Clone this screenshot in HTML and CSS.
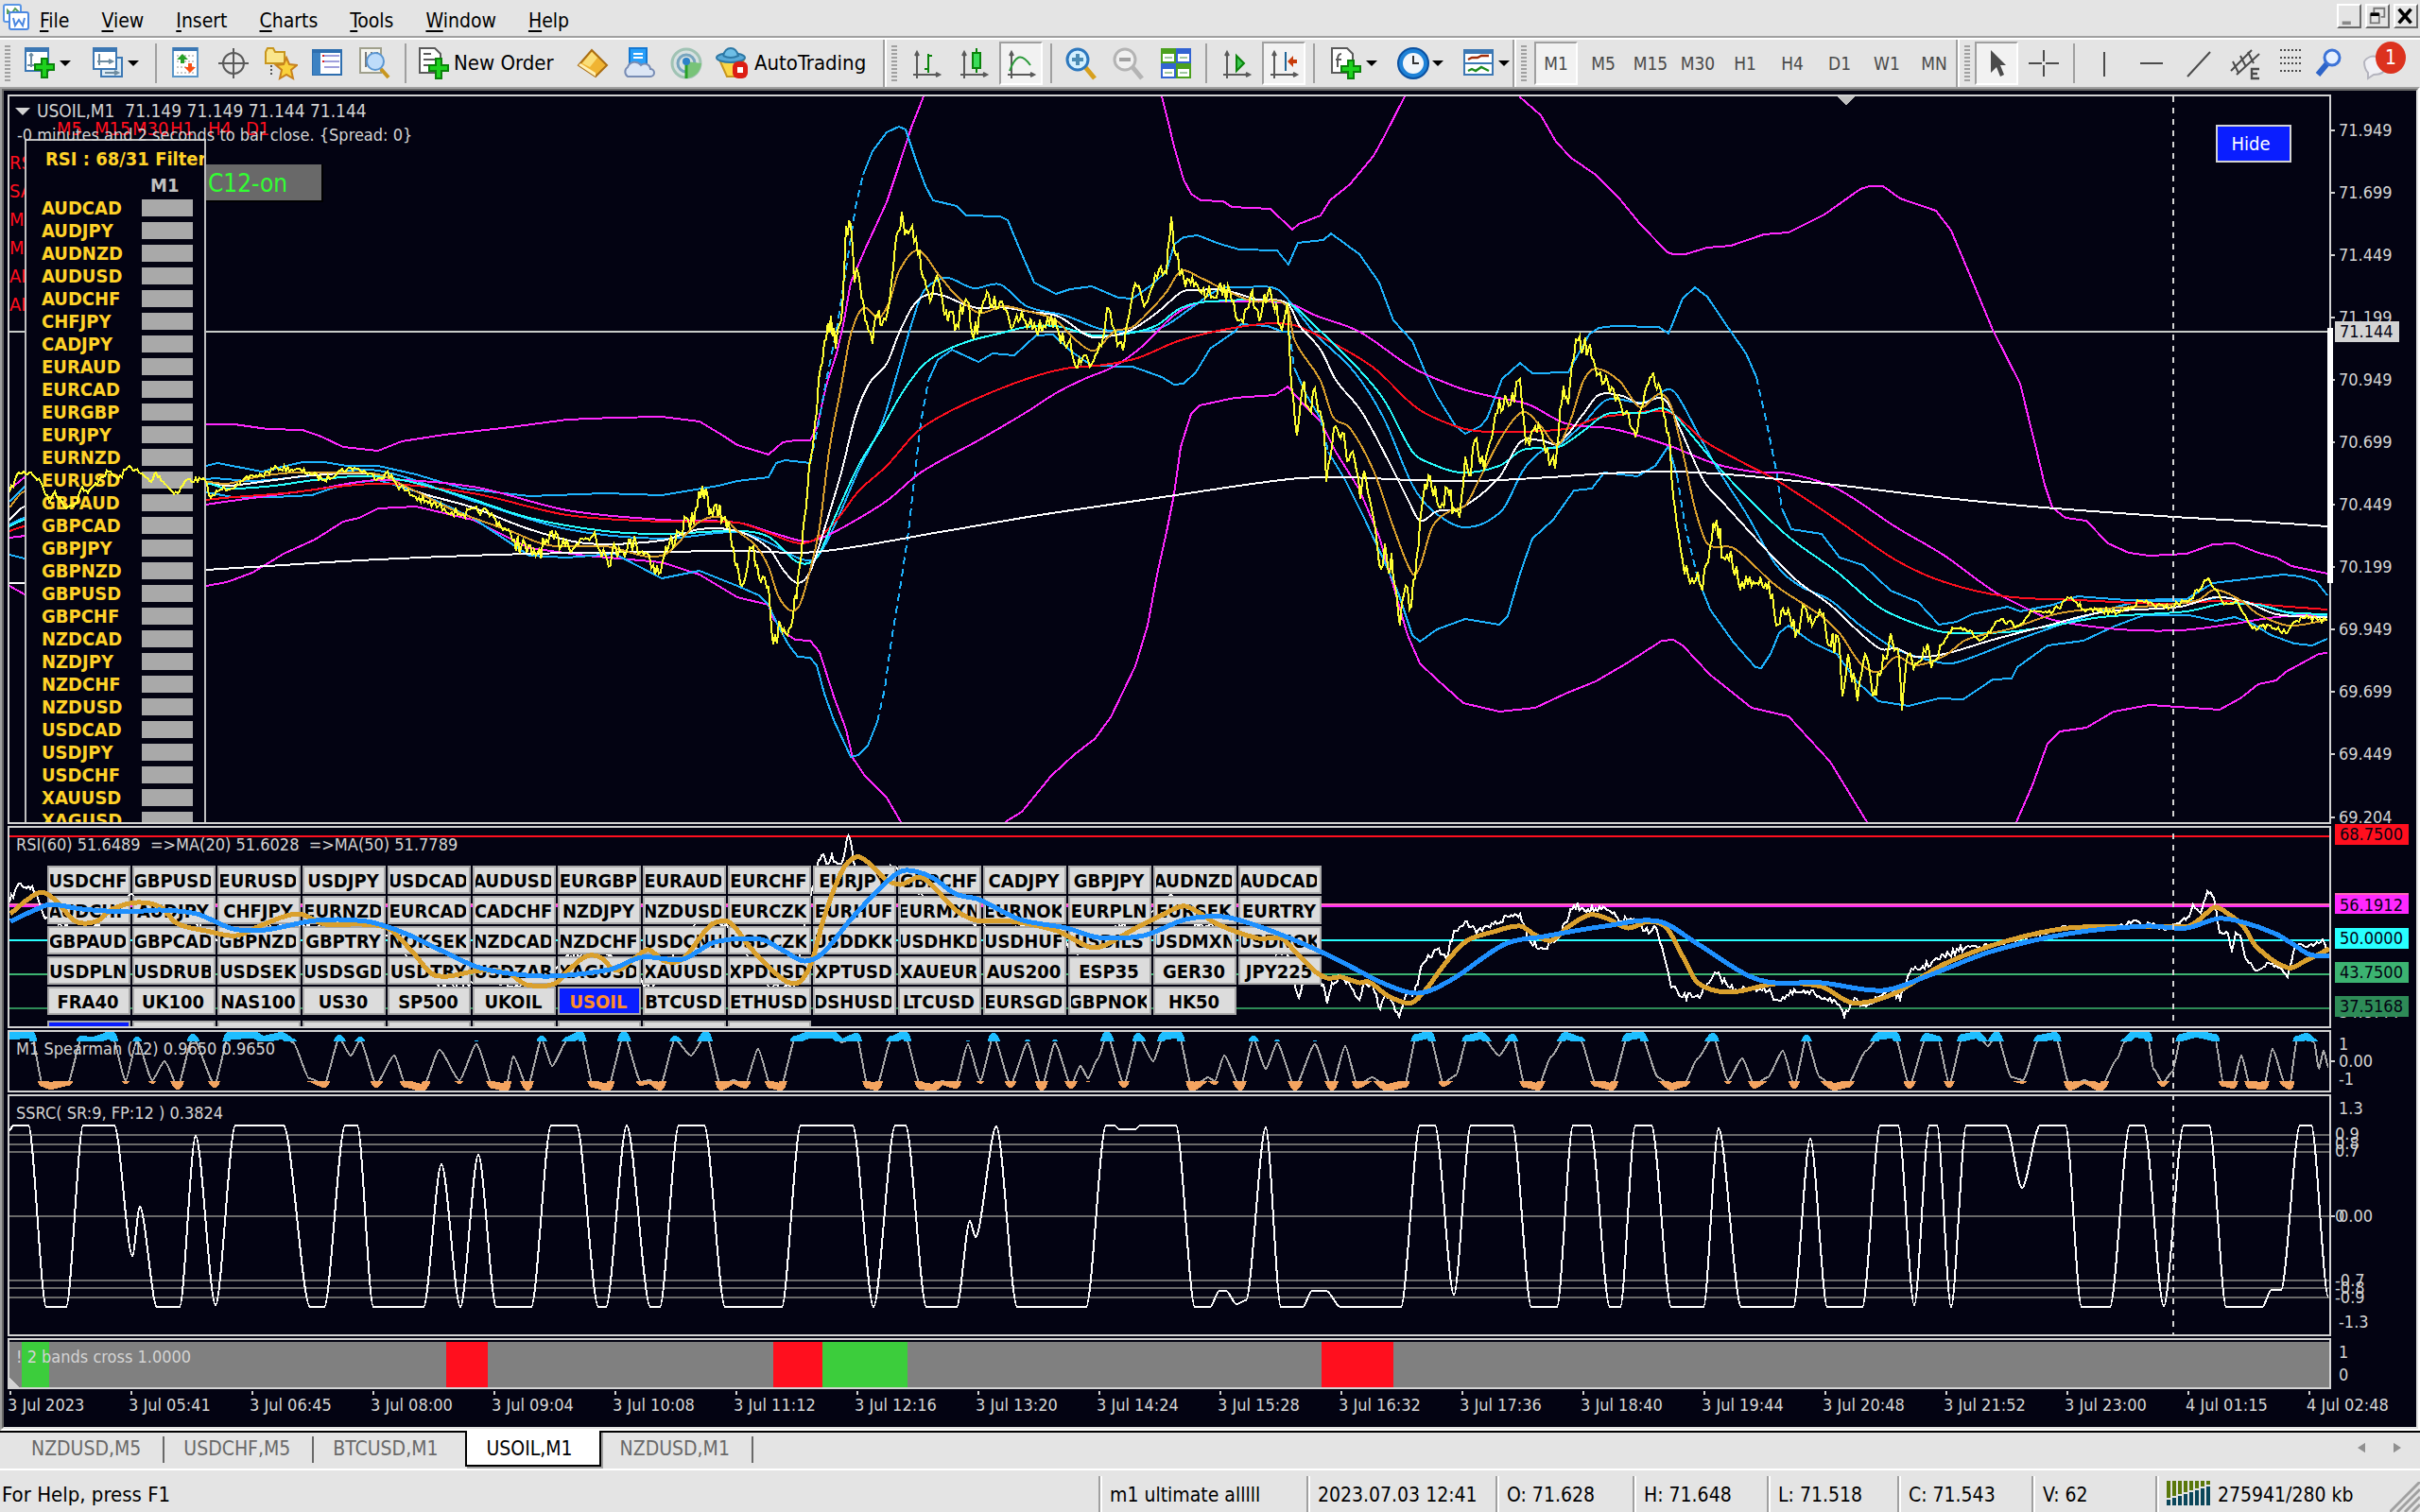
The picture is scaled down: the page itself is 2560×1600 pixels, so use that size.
FILE: index.html
```html
<!DOCTYPE html>
<html lang="en">

<head>
    <meta charset="utf-8" />
    <title>USOIL,M1</title>
    <meta name="viewport" content="width=device-width, initial-scale=1">
    <link rel="stylesheet" href="styles.css">
</head>

<body>
    <header class="menubar">
        <svg class="app-icon" viewBox="0 0 15 15">
            <rect x="1" y="1" width="9" height="9" rx="1" fill="#fff" stroke="#5a96e6" />
            <path d="M3 6V4l2 2 2-3 2 2" fill="none" stroke="#5aa05a" />
            <rect x="4" y="5" width="10" height="9" rx="1" fill="#fff" stroke="#4b87e1" />
            <path d="M6 8l1 4 2-3 2 3 1-4" fill="none" stroke="#4b87e1" />
        </svg>
        <nav class="menu">
            <a href="#"><u>F</u>ile</a>
            <a href="#"><u>V</u>iew</a>
            <a href="#"><u>I</u>nsert</a>
            <a href="#"><u>C</u>harts</a>
            <a href="#"><u>T</u>ools</a>
            <a href="#"><u>W</u>indow</a>
            <a href="#"><u>H</u>elp</a>
        </nav>
        <div class="window-buttons">
            <button aria-label="Minimize"><svg viewBox="0 0 12 12"><path d="M2 10h5" stroke="#888" stroke-width="2" /></svg></button>
            <button aria-label="Restore"><svg viewBox="0 0 12 12" fill="none" stroke="#777"><path d="M4 4V1.500h6v5H8" /><path d="M2 5h5v5H2z" /><path d="M2 5h5" stroke="#000" stroke-width="2" /></svg></button>
            <button aria-label="Close"><svg viewBox="0 0 12 12"><path d="M2 2l7 8M9 2l-7 8" stroke="#000" stroke-width="2" /></svg></button>
        </div>
    </header>

    <div class="toolbar">
        <div class="tools tools-main">
            <span class="grip"></span>
            <button class="tool drop" aria-label="New chart">
                <svg viewBox="0 0 18 18"><rect x="1" y="1" width="12" height="12" fill="#fff" stroke="#3c78b4" /><path d="M1 2h12" stroke="#3c78b4" stroke-width="2" /><path d="M4 4v7M2 10h8M3 5l1-1 1 1" stroke="#6e8ca0" fill="none" /><path d="M9.500 6.500h3v3h3.500v3h-3.500v4h-3v-4H6v-3h3.500z" fill="#1ed21e" stroke="#0a820a" /></svg>
            </button>
            <button class="tool drop" aria-label="Profiles">
                <svg viewBox="0 0 18 18"><rect x="5" y="6" width="11" height="10" fill="#dcebf5" stroke="#3c78b4" /><rect x="1" y="1" width="12" height="11" fill="#fff" stroke="#3c78b4" /><path d="M1 2h12" stroke="#3c78b4" stroke-width="2" /><path d="M4 4v6M3 8h8M9 7l2 1-2 1M7 14h7M12 13l2 1-2 1" stroke="#6e8ca0" fill="none" /></svg>
            </button>
            <span class="sep"></span>
            <button class="tool" aria-label="Market Watch">
                <svg viewBox="0 0 18 18"><rect x="2" y="1" width="13" height="15" fill="#fff" stroke="#5a96c8" /><path d="M2 1.500h13" stroke="#3c78b4" stroke-width="2" /><path d="M4 5h9M4 8h9M4 11h9M4 14h9" stroke="#c8c8c8" stroke-dasharray="1 1" /><path d="M7 4l3 3H8v2H6V7H4z" fill="#28a028" /><path d="M11 14l3-3h-2V9h-2v2H8z" fill="#fa5014" /></svg>
            </button>
            <button class="tool" aria-label="Data Window">
                <svg viewBox="0 0 18 18" fill="none" stroke="#5a5a5a"><circle cx="9" cy="9" r="5.500" /><path d="M9 1v16M1 9h16" /></svg>
            </button>
            <button class="tool" aria-label="Navigator">
                <svg viewBox="0 0 18 18"><path d="M1 3l1-2h3l1 2h5v6H1z" fill="#fae68c" stroke="#c8961e" /><path d="M4 10v6" stroke="#555" stroke-dasharray="1 1" /><path d="M12 6l1.500 3.500 4 .5-3 2.500 1 4.500-3.500-2-3.500 2 1-4.500-3-2.500 4-.5z" fill="#fad23c" stroke="#c8821e" /></svg>
            </button>
            <button class="tool" aria-label="Terminal">
                <svg viewBox="0 0 18 18"><rect x="1" y="2" width="15" height="13" fill="#fff" stroke="#2d6eaf" /><rect x="1" y="2" width="4" height="13" fill="#3c82c3" /><path d="M1 2.500h15" stroke="#2d6eaf" stroke-width="2" /><path d="M7 5h8M7 8h8M7 11h8" stroke="#a0a0dc" /><path d="M6 5h1M6 8h1" stroke="#dc1e1e" /></svg>
            </button>
            <button class="tool" aria-label="Strategy Tester">
                <svg viewBox="0 0 18 18"><rect x="1" y="1" width="11" height="13" fill="#f5f5f0" stroke="#a0a08c" /><path d="M4 3v8M7 3v8M10 3v4" stroke="#787878" /><circle cx="9" cy="8" r="4.500" fill="#bedcfa" stroke="#5a96d2" /><path d="M12 12l4 4.500" stroke="#c8961e" stroke-width="2" /></svg>
            </button>
            <span class="sep"></span>
            <button class="tool text-tool order">
                <svg viewBox="0 0 18 18"><path d="M1 1h8l3 3v10H1z" fill="#fff" stroke="#5a5a5a" /><path d="M3 4h4M3 7h7M3 10h5" stroke="#5a5a5a" /><path d="M9.500 6.500h3v3.500h3.500v3h-3.500v4h-3v-4H6v-3h3.500z" fill="#1ed21e" stroke="#0a820a" /></svg>
                New Order
            </button>
            <button class="tool" aria-label="MetaEditor">
                <svg viewBox="0 0 18 18"><path d="M9 2l8 8-6 6-9-6z" fill="#f0b432" stroke="#aa6e14" /><path d="M2 10l9 6v-2L3 9z" fill="#fff0b4" /><path d="M9 3l3 3-4 5-4-2z" fill="#fade78" /></svg>
            </button>
            <button class="tool" aria-label="Virtual Hosting">
                <svg viewBox="0 0 18 18"><path d="M4 1h9v11H4z" fill="#28a0fa" stroke="#1478d2" /><path d="M6 4h5M6 6h5" stroke="#fff" /><path d="M3 16a3 3 0 0 1 0-5 4 4 0 0 1 7-1 3 3 0 0 1 5 2 2 2 0 0 1 0 4z" fill="#dce6f5" stroke="#788cb4" /></svg>
            </button>
            <button class="tool" aria-label="Signals">
                <svg viewBox="0 0 18 18" fill="none"><circle cx="9" cy="9" r="7.500" fill="#d7e1e1" stroke="#a0c3b4" stroke-width="1.500" /><circle cx="9" cy="9" r="4.500" stroke="#78a5be" stroke-width="1.500" /><path d="M9 8v9q7-1 8-8z" fill="#78c378" /><path d="M9 8v9" stroke="#28a028" stroke-width="1.500" /><circle cx="9" cy="8" r="2" fill="#2d82c8" /></svg>
            </button>
            <button class="tool text-tool auto">
                <svg viewBox="0 0 18 18"><path d="M2 7h13l-4 9H6z" fill="#fad746" stroke="#c8961e" /><ellipse cx="8" cy="6" rx="7.500" ry="2.500" fill="#5aaad7" stroke="#2d78a5" /><path d="M4 5q1-4 4-4t4 4q-4 2-8 0" fill="#6ebee6" stroke="#2d78a5" /><rect x="9" y="8" width="8" height="9" rx="3" fill="#dc1e14" /><path d="M11.500 11h3v3h-3z" fill="#fff" /></svg>
                AutoTrading
            </button>
        </div>
        <div class="tools tools-chart">
            <span class="grip"></span>
            <button class="tool" aria-label="Bar chart"><svg viewBox="0 0 18 18" fill="none" stroke="#5a5a5a"><path d="M4 3v14M2 15h14M3 5l1-2 1 2M14 14l2 1-2 1" /><path d="M10 4v10M10 5h2M8 12h2" stroke="#0a820a" /></svg></button>
            <button class="tool" aria-label="Candlesticks"><svg viewBox="0 0 18 18" fill="none" stroke="#5a5a5a"><path d="M4 3v14M2 15h14M3 5l1-2 1 2M14 14l2 1-2 1" /><path d="M10.500 1v13" stroke="#0a820a" /><rect x="8.500" y="3.500" width="4" height="8" fill="#3cdc5a" stroke="#0a820a" /></svg></button>
            <button class="tool pressed" aria-label="Line chart"><svg viewBox="0 0 18 18" fill="none" stroke="#5a5a5a"><path d="M4 3v14M2 15h14M3 5l1-2 1 2M14 14l2 1-2 1" /><path d="M3 13c3-8 6-10 11-3" stroke="#2d9b3c" /></svg></button>
            <span class="sep"></span>
            <button class="tool" aria-label="Zoom in"><svg viewBox="0 0 18 18"><path d="M11 11l5 6" stroke="#d7a01e" stroke-width="2.500" /><circle cx="7" cy="7" r="5.500" fill="#d2f0ff" stroke="#2d78be" stroke-width="1.500" /><path d="M4 7h6M7 4v6" stroke="#4b8cb4" stroke-width="2" /></svg></button>
            <button class="tool" aria-label="Zoom out"><svg viewBox="0 0 18 18"><path d="M11 11l5 6" stroke="#b4b4b4" stroke-width="2.500" /><circle cx="7" cy="7" r="5.500" fill="#f0f0f0" stroke="#b4b4b4" stroke-width="1.500" /><path d="M4 7h6" stroke="#a0a0a0" stroke-width="2" /></svg></button>
            <button class="tool" aria-label="Tile windows"><svg viewBox="0 0 18 18"><path d="M1 1h8v8H1z" fill="#4ba01e" /><path d="M9 1h8v8H9z" fill="#3264d2" /><path d="M1 9h8v8H1z" fill="#3264d2" /><path d="M9 9h8v8H9z" fill="#4ba01e" /><path d="M2 4h6v4H2zM10 4h6v4h-6zM2 12h6v4H2zM10 12h6v4h-6z" fill="#fff" /><path d="M3 6h4M11 6h4M3 14h4M11 14h4" stroke="#a0c8a0" /></svg></button>
            <span class="sep"></span>
            <button class="tool" aria-label="Auto scroll"><svg viewBox="0 0 18 18" fill="none" stroke="#5a5a5a"><path d="M4 3v14M2 15h14M3 5l1-2 1 2M14 14l2 1-2 1" /><path d="M9 5l4 4-4 4z" fill="#3cc850" stroke="#0a820a" /></svg></button>
            <button class="tool pressed" aria-label="Chart shift"><svg viewBox="0 0 18 18" fill="none" stroke="#5a5a5a"><path d="M4 3v14M2 15h14M3 5l1-2 1 2M14 14l2 1-2 1" /><path d="M10 3v10" stroke="#1e6496" /><path d="M11 8l3-3v2h2v2h-2v2z" fill="#c83c0a" stroke="none" /></svg></button>
            <span class="sep"></span>
            <button class="tool drop" aria-label="Indicators"><svg viewBox="0 0 18 18"><path d="M1 1h8l3 3v10H1z" fill="#fff" stroke="#5a5a5a" /><path d="M6 4q-2 0-2 3v4M3 7h3" stroke="#5a5a5a" fill="none" /><path d="M9.500 7.500h3v3h3.500v3h-3.500v3.500h-3v-3.500H6v-3h3.500z" fill="#1ed21e" stroke="#0a820a" /></svg></button>
            <button class="tool drop" aria-label="Periods"><svg viewBox="0 0 18 18"><circle cx="9" cy="9" r="8" fill="#1e82d7" stroke="#0a50a0" /><circle cx="9" cy="9" r="5.500" fill="#f0f5fa" /><path d="M9 5v4h3" stroke="#333" fill="none" /></svg></button>
            <button class="tool drop" aria-label="Templates"><svg viewBox="0 0 18 18"><rect x="1" y="2" width="15" height="13" fill="#fff" stroke="#3c78b4" /><path d="M1 3h15" stroke="#3c78b4" stroke-width="2" /><path d="M1 9h15" stroke="#3c78b4" /><path d="M3 7l2-1h3l2-1h4" stroke="#a02d0a" fill="none" stroke-width="1.200" /><path d="M3 13l2-1 2 1 3-2 2 1 2 1" stroke="#1e8c1e" fill="none" stroke-width="1.200" /></svg></button>
        </div>
        <div class="tools tools-period">
            <span class="grip"></span>
            <button class="tool period pressed">M1</button>
            <button class="tool period">M5</button>
            <button class="tool period">M15</button>
            <button class="tool period">M30</button>
            <button class="tool period">H1</button>
            <button class="tool period">H4</button>
            <button class="tool period">D1</button>
            <button class="tool period">W1</button>
            <button class="tool period">MN</button>
        </div>
        <div class="tools tools-draw">
            <span class="grip"></span>
            <button class="tool pressed" aria-label="Cursor"><svg viewBox="0 0 18 18"><path d="M6 2v12l3-3 2 5 2-1-2-5h3z" fill="#4b4b4b" /></svg></button>
            <button class="tool" aria-label="Crosshair"><svg viewBox="0 0 18 18" stroke="#4b4b4b"><path d="M9 2v6M9 10v6M1 9h7M10 9h7" /></svg></button>
            <span class="sep"></span>
            <button class="tool" aria-label="Vertical line"><svg viewBox="0 0 18 18" stroke="#4b4b4b"><path d="M9 3v13" /></svg></button>
            <button class="tool" aria-label="Horizontal line"><svg viewBox="0 0 18 18" stroke="#4b4b4b"><path d="M3 9h12" /></svg></button>
            <button class="tool" aria-label="Trendline"><svg viewBox="0 0 18 18" stroke="#4b4b4b"><path d="M3 16L15 3" /></svg></button>
            <button class="tool" aria-label="Equidistant channel"><svg viewBox="0 0 18 18" stroke="#4b4b4b" fill="none"><path d="M1 13L12 2M4 15L16 4M2 8l3 6M6 5l3 6M10 3l3 6" /><path d="M16 12h-4v5h4M12 14.500h3" stroke-width="1.200" /></svg></button>
            <button class="tool narrow" aria-label="Fibonacci"><svg viewBox="0 0 18 18" stroke="#4b4b4b"><path d="M4 2h11M4 6h11M4 9h11M4 13h11" stroke-dasharray="1 1" /></svg></button>
            <button class="tool narrow" aria-label="Search"><svg viewBox="0 0 18 18"><path d="M8 9l-5 6" stroke="#2d64c8" stroke-width="3" /><circle cx="10.500" cy="6" r="4" fill="#e6f0ff" stroke="#3c73d7" stroke-width="1.500" /></svg></button>
            <button class="tool chat" aria-label="Messages">
                <svg viewBox="0 0 18 18"><path d="M2 8a6 6 0 0 1 11 3q0 4-6 4l-3 2v-3q-2-2-2-6" fill="#f0f0f5" stroke="#b4b4be" /></svg>
                <span class="badge">1</span>
            </button>
        </div>
    </div>

    <main class="chart-window">
        <div class="chart-inner">
            <section class="panel" data-panel="price">
                <div class="plot">
                    <svg class="layer back" preserveAspectRatio="none"></svg>
                    <div class="side-labels">
                        <span>RSI</span><span>SAR</span><span>MA</span><span>MA</span><span>ALL</span><span>ALL</span>
                    </div>
                    <div class="signal">
                        <div class="signal-title" id="signal-title">RSI : 68/31 Filter</div>
                        <table aria-labelledby="signal-title">
                            <thead><tr><th></th><th>M1</th></tr></thead>
                            <tbody id="pairs"></tbody>
                        </table>
                    </div>
                    <div class="status-box">C12-on</div>
                    <div class="tf-labels">
                        <span>M5</span><span>M15</span><span>M30</span><span>H1</span><span>H4</span><span>D1</span>
                    </div>
                    <svg class="layer front" preserveAspectRatio="none"></svg>
                    <div class="chart-title">
                        <div class="quote"><i class="caret"></i>USOIL,M1&nbsp; 71.149 71.149 71.144 71.144</div>
                        <div>-0 minutes and 2 seconds to bar close. {Spread: 0}</div>
                    </div>
                    <button class="hide-button">Hide</button>
                </div>
                <div class="axis-wrap">
                    <div class="axis clipped"></div>
                    <div class="range"></div>
                </div>
            </section>

            <section class="panel" data-panel="rsi">
                <div class="plot">
                    <svg class="layer back" preserveAspectRatio="none"></svg>
                    <div class="symbols" id="symbols"></div>
                    <svg class="layer front" preserveAspectRatio="none"></svg>
                    <div class="panel-title">RSI(60) 51.6489&nbsp; =&gt;MA(20) 51.6028&nbsp; =&gt;MA(50) 51.7789</div>
                </div>
                <div class="axis"></div>
            </section>

            <section class="panel" data-panel="spearman">
                <div class="plot">
                    <svg class="layer back" preserveAspectRatio="none"></svg>
                    <div class="panel-title">M1 Spearman (12) 0.9650 0.9650</div>
                </div>
                <div class="axis"></div>
            </section>

            <section class="panel" data-panel="ssrc">
                <div class="plot">
                    <svg class="layer back" preserveAspectRatio="none"></svg>
                    <div class="panel-title">SSRC( SR:9, FP:12 ) 0.3824</div>
                </div>
                <div class="axis"></div>
            </section>

            <section class="panel" data-panel="bands">
                <div class="plot">
                    <svg class="layer back" preserveAspectRatio="none"></svg>
                    <div class="panel-title">! 2 bands cross 1.0000</div>
                </div>
                <div class="axis"></div>
            </section>

            <div class="time-axis" id="times"></div>
        </div>
    </main>

    <div class="tabs">
        <a href="#">NZDUSD,M5</a>
        <a href="#">USDCHF,M5</a>
        <a href="#" class="last">BTCUSD,M1</a>
        <a href="#" class="active">USOIL,M1</a>
        <a href="#">NZDUSD,M1</a>
        <div class="tab-scroll">
            <button aria-label="Scroll left"><svg viewBox="0 0 6 8"><path d="M6 0v8L0 4z" /></svg></button>
            <button aria-label="Scroll right"><svg viewBox="0 0 6 8"><path d="M0 0v8l6-4z" /></svg></button>
        </div>
    </div>

    <footer class="statusbar">
        <span class="help">For Help, press F1</span>
        <span>m1 ultimate alllll</span>
        <span>2023.07.03 12:41</span>
        <span>O: 71.628</span>
        <span>H: 71.648</span>
        <span>L: 71.518</span>
        <span>C: 71.543</span>
        <span>V: 62</span>
        <span class="traffic">
            <svg viewBox="0 0 46 26">
                <path d="M2 0v18M8 0v16M14 0v14M20 0v12M26 0v10M32 0v8M38 0v6M44 0v4" stroke="#5a780a" stroke-width="4" />
                <path d="M2 20v6M8 18v8M14 16v10M20 14v12M26 12v14M32 10v16M38 8v18M44 6v20" stroke="#0a465a" stroke-width="4" />
            </svg>
            275941/280 kb
        </span>
        <svg class="resize" viewBox="0 0 32 32"><path d="M0 32L32 0M8 32L32 8M16 32L32 16M24 32l8-8" stroke="#a0a0a0" stroke-width="3" /></svg>
    </footer>

    <script src="charts.js"></script>
</body>

</html>
```
FILE: styles.css
```css
* {
    box-sizing: border-box;
}

body {
    margin: 0;
    height: 100vh;
    display: flex;
    flex-direction: column;
    overflow: hidden;
    background-color: #e4e4e4;
    color: #000;
    font-family: "DejaVu Sans Condensed", "DejaVu Sans", sans-serif;
    font-size: 21px;
}

button {
    margin: 0;
    padding: 0;
    border: none;
    background: none;
    color: inherit;
    font: inherit;
}

a {
    color: inherit;
    text-decoration: none;
}

/* menu */

.menubar {
    display: flex;
    align-items: center;
    height: 42px;
    padding: 2px 2px 0;
    border-bottom: 2px solid #fff;
    box-shadow: inset 0 -2px #a0a0a0;
}

.app-icon {
    width: 30px;
    height: 30px;
    margin-top: -6px;
}

.menu {
    display: flex;
    gap: 34px;
    margin: 2px 0 0 10px;
}

.menu u {
    text-underline-offset: 3px;
    text-decoration-thickness: 2px;
}

.window-buttons {
    display: flex;
    gap: 4px;
    margin-left: auto;
    margin-top: -8px;
}

.window-buttons button {
    width: 26px;
    height: 26px;
    border: 2px solid;
    border-color: #fff #696969 #696969 #fff;
}

.window-buttons svg {
    display: block;
    width: 22px;
    height: 22px;
}

/* toolbar */

.toolbar {
    display: flex;
    height: 50px;
}

.tools {
    display: flex;
    align-items: center;
    padding-left: 5px;
    border-left: 2px solid #fff;
    border-right: 2px solid #a0a0a0;
}

.tools-main {
    width: 936px;
    border-left: none;
}

.tools-chart {
    width: 666px;
}

.tools-period {
    width: 469px;
}

.tools-draw {
    flex: 1;
    border-right: none;
}

.grip {
    flex: none;
    width: 6px;
    height: 38px;
    margin-right: 6px;
    background: repeating-linear-gradient(#a0a0a0 0 2px, transparent 2px 4px);
}

.tools-main .grip,
.tools-draw .grip {
    margin-right: 3px;
}

.sep {
    flex: none;
    width: 2px;
    height: 42px;
    margin: 0 6px;
    background-color: #a0a0a0;
}

.tool {
    display: flex;
    align-items: center;
    justify-content: center;
    flex: none;
    width: 50px;
    height: 46px;
}

.tool svg {
    width: 36px;
    height: 36px;
}

.drop {
    width: 70px;
}

.tools-main .drop {
    width: 72px;
}

.drop::after {
    content: "";
    margin-left: 2px;
    border: 6px solid transparent;
    border-top-color: #000;
    border-bottom: none;
}

.text-tool {
    justify-content: flex-start;
    gap: 2px;
    font-size: 22px;
    line-height: 46px;
    white-space: nowrap;
}

.order {
    width: 165px;
    padding-left: 6px;
}

.auto {
    width: 170px;
    padding-left: 6px;
    gap: 5px;
}

.pressed {
    width: 46px;
    margin: 0 2px;
    border: 2px solid;
    border-color: #a0a0a0 #fff #fff #a0a0a0;
    background-color: #f2f2f2;
}

.period {
    color: #4b4b4b;
    font-size: 19px;
}

.narrow {
    width: 42px;
}

.chat {
    position: relative;
    width: 60px;
}

.badge {
    position: absolute;
    top: 0;
    right: 0;
    width: 32px;
    height: 34px;
    border-radius: 50%;
    background-color: #dc321e;
    color: #fff;
    line-height: 34px;
    text-align: center;
}

/* chart window */

.chart-window {
    flex: 1;
    min-height: 0;
    border: 2px solid;
    border-color: #a0a0a0 #fff #fff #a0a0a0;
}

.chart-inner {
    display: grid;
    grid-template-rows: 772fr 214fr 66fr 256fr 54fr 38px;
    row-gap: 2px;
    height: 100%;
    padding: 4px 0 0 4px;
    border: 2px solid;
    border-color: #696969 #e3e3e3 #e3e3e3 #696969;
    background-color: #030312;
    color: #d3d3d3;
    font-size: 18px;
}

.panel {
    display: grid;
    grid-template-columns: 1fr 90px;
    min-height: 0;
}

.plot {
    position: relative;
    border: 2px solid #d3d3d3;
    overflow: hidden;
}

.layer {
    position: absolute;
    top: 0;
    left: 0;
    width: 100%;
    height: 100%;
    shape-rendering: crispEdges;
    pointer-events: none;
}

.layer path,
.layer line {
    fill: none;
    stroke-width: 2px;
    vector-effect: non-scaling-stroke;
}

.layer .thick {
    stroke-width: 5px;
}

.layer .bulge {
    stroke-width: 8px;
}

.layer .dashed {
    stroke-dasharray: 6 6;
}

.layer .steep {
    stroke-dasharray: 8 5;
}

.axis-wrap {
    position: relative;
}

.axis {
    position: relative;
    height: 100%;
}

.clipped {
    overflow: hidden;
}

.range {
    position: absolute;
    top: 32%;
    left: -4px;
    width: 6px;
    height: 35%;
    background-color: #fff;
}

.axis span {
    position: absolute;
    left: 8px;
    height: 22px;
    margin-top: -11px;
    line-height: 22px;
}

.axis .tick::before {
    content: "";
    position: absolute;
    top: 10px;
    left: -8px;
    width: 4px;
    height: 2px;
    background-color: #d3d3d3;
}

.axis .near {
    left: 4px;
}

.axis .tag {
    left: 4px;
    width: 78px;
    padding-left: 5px;
    color: #030312;
}

.axis .price-tag {
    width: 68px;
    background-color: #d3d3d3;
}

.axis .red {
    background-color: #ff0f1e;
}

.axis .magenta {
    border-top: 2px solid #ff69b4;
    background-color: #ff28ff;
}

.axis .cyan {
    background-color: #28ffff;
}

.axis .green {
    background-color: #3cb371;
}

.axis .sea {
    background-color: #2e8b57;
}

.chart-title {
    position: absolute;
    top: 2px;
    left: 8px;
    line-height: 26px;
}

.quote {
    font-size: 19px;
}

.caret {
    display: inline-block;
    margin: 0 7px 2px -2px;
    border: 8px solid transparent;
    border-top-color: #d3d3d3;
    border-bottom: none;
}

.panel-title {
    position: absolute;
    top: 6px;
    left: 7px;
    line-height: 24px;
}

.tf-labels {
    position: absolute;
    top: 22px;
    left: 50px;
    display: flex;
    color: #ff0f1e;
    font-size: 20px;
}

.tf-labels span {
    width: 40px;
}

.side-labels {
    position: absolute;
    top: 55px;
    left: 0;
    display: flex;
    flex-direction: column;
    color: #ff0f1e;
    font-size: 20px;
    line-height: 30px;
}

.signal {
    position: absolute;
    top: 45px;
    left: 16px;
    width: 192px;
    height: 100%;
    border: 2px solid #c0c0c0;
    background-color: #030312;
    color: #ffd228;
    font-size: 20px;
    font-weight: bold;
    overflow: hidden;
}

.signal-title {
    height: 35px;
    padding-left: 20px;
    line-height: 38px;
    white-space: nowrap;
}

.signal table {
    table-layout: fixed;
    width: 160px;
    border-collapse: collapse;
    margin-left: 16px;
}

.signal th,
.signal td {
    height: 24px;
    padding: 0;
    line-height: 24px;
    text-align: left;
}

.signal th {
    width: 106px;
    color: #c0c0c0;
}

.signal th + th {
    width: 54px;
    padding-left: 9px;
}

.signal td + td::before {
    content: "";
    display: block;
    width: 54px;
    height: 18px;
    background-color: #a9a9a9;
}

.status-box {
    position: absolute;
    top: 72px;
    left: 208px;
    width: 124px;
    height: 40px;
    padding-left: 2px;
    border-right: 2px solid #000;
    border-bottom: 2px solid #000;
    background-color: #696969;
    color: #32ff32;
    font-size: 26px;
    line-height: 40px;
}

.hide-button {
    position: absolute;
    top: 30px;
    right: 40px;
    width: 80px;
    height: 40px;
    padding-right: 6px;
    border: 2px solid #d3d3d3;
    background-color: #0a1eff;
    color: #fff;
    font-size: 20px;
}

.symbols {
    position: absolute;
    top: 40px;
    left: 40px;
    display: flex;
    flex-direction: column;
    gap: 2px;
}

.symbols div {
    display: flex;
    gap: 2px;
}

.symbols div:last-child {
    margin-top: 4px;
}

.symbols button {
    width: 88px;
    height: 30px;
    padding: 0 3px 0 1px;
    border: 2px solid #a9a9a9;
    background-color: #dcdcdc;
    color: #000;
    font-size: 20px;
    font-weight: bold;
    line-height: 28px;
}

.symbols button span {
    display: flex;
    justify-content: center;
    overflow: hidden;
}

.symbols .selected {
    background-color: #0a1eff;
    color: #ff8c28;
}

.time-axis {
    display: flex;
    overflow: hidden;
}

.time-axis span {
    position: relative;
    flex: 0 0 128px;
    padding-top: 4px;
    white-space: nowrap;
}

.time-axis span::before {
    content: "";
    position: absolute;
    top: -2px;
    left: 2px;
    width: 2px;
    height: 6px;
    background-color: #d3d3d3;
}

/* chart tabs */

.tabs {
    display: flex;
    height: 42px;
    padding-left: 13px;
    border-top: 2px solid #000;
    border-bottom: 2px solid #fff;
    color: #696969;
    line-height: 34px;
}

.tabs a {
    position: relative;
    height: 36px;
    padding: 0 25px 0 20px;
}

.tabs a::after {
    content: "";
    position: absolute;
    top: 4px;
    right: 0;
    width: 2px;
    height: 28px;
    background-color: #696969;
}

.tabs a.active {
    margin: -2px 0 0 4px;
    padding: 2px 28px 0 20px;
    height: 38px;
    border: 2px solid #000;
    border-top: none;
    background-color: #fff;
    box-shadow: 2px 2px #a0a0a0;
    color: #000;
}

.tabs a.active::after,
.tabs a.last::after {
    display: none;
}

.tab-scroll {
    display: flex;
    align-items: center;
    gap: 30px;
    margin: -6px 20px 0 auto;
}

.tab-scroll svg {
    display: block;
    width: 8px;
    height: 12px;
    fill: #909090;
}

/* status bar */

.statusbar {
    position: relative;
    display: grid;
    grid-template-columns: 1fr 220px 200px 145px 142px 138px 142px 131px 278px;
    height: 44px;
    padding: 6px 0 2px;
    line-height: 40px;
}

.statusbar span {
    padding-left: 8px;
    border-left: 2px solid #fff;
    box-shadow: -2px 0 #a0a0a0;
    white-space: nowrap;
}

.statusbar .help {
    padding-left: 2px;
    border: none;
    box-shadow: none;
    font-size: 22px;
}

.traffic {
    display: flex;
    align-items: center;
    gap: 8px;
}

.traffic svg {
    width: 46px;
    height: 26px;
    margin-top: -4px;
}

.resize {
    position: absolute;
    right: 0;
    bottom: 0;
    width: 32px;
    height: 32px;
}
```
FILE: charts.js
```js
// every panel keeps its own box: x, y, width, height of the plot in chart units
const boxes = {
    price: [10, 102, 2454, 768],
    rsi: [10, 876, 2454, 210],
    spearman: [10, 1092, 2454, 62],
    ssrc: [10, 1160, 2454, 252],
    bands: [10, 1418, 2454, 50]
};

const BLUE = '#1eb4ff';
const MAGENTA = '#ff28ff';
const CYAN = '#28ffff';
const RED = '#ff0f1e';
const GOLD = '#daa02d';
const YELLOW = '#ffff32';
const SVG = 'http://www.w3.org/2000/svg';

function layer(name, which) {
    const svg = document.querySelector(`[data-panel="${name}"] .${which}`);
    svg.setAttribute('viewBox', boxes[name].join(' '));
    return svg;
}

function add(svg, tag, attrs) {
    const el = document.createElementNS(SVG, tag);
    for (const key in attrs) {
        el.setAttribute(key, attrs[key]);
    }
    svg.appendChild(el);
    return el;
}

// "x,y x,y ..." -> [[x, y], ...]
function parse(text) {
    return text.trim().split(/\s+/).map(p => p.split(',').map(Number));
}

function straight(points) {
    return 'M' + points.map(p => p.join(' ')).join('L');
}

function smooth(points) {
    let d = 'M' + points[0].join(' ');
    for (let i = 0; i < points.length - 1; i++) {
        const p0 = points[i - 1] || points[i];
        const p1 = points[i];
        const p2 = points[i + 1];
        const p3 = points[i + 2] || p2;
        const k = (p2[0] - p1[0]) / 3;
        const m1 = (p2[1] - p0[1]) / (p2[0] - p0[0]);
        const m2 = (p3[1] - p1[1]) / (p3[0] - p1[0]);
        d += `C${p1[0] + k} ${p1[1] + k * m1} ${p2[0] - k} ${p2[1] - k * m2} ${p2[0]} ${p2[1]}`;
    }
    return d;
}

// flat at both ends of every step
function eased(points, amount) {
    let d = 'M' + points[0].join(' ');
    for (let i = 1; i < points.length; i++) {
        const a = points[i - 1];
        const b = points[i];
        const k = (b[0] - a[0]) * amount;
        d += `C${a[0] + k} ${a[1]} ${b[0] - k} ${b[1]} ${b[0]} ${b[1]}`;
    }
    return d;
}

// adds bar to bar noise between the given points
function jagged(points, amp) {
    let seed = 7;
    const out = [points[0]];
    for (let i = 1; i < points.length; i++) {
        const a = points[i - 1];
        const b = points[i];
        const steps = Math.max(1, Math.round((b[0] - a[0]) / 2));
        for (let s = 1; s < steps; s++) {
            seed = (seed * 16807) % 2147483647;
            const n = (seed / 2147483647 - 0.5) * 2 * (typeof amp === 'function' ? amp(a[0]) : amp);
            out.push([a[0] + (b[0] - a[0]) * s / steps, a[1] + (b[1] - a[1]) * s / steps + n]);
        }
        out.push(b);
    }
    return out;
}

function curve(svg, d, color, cls) {
    return add(svg, 'path', { d: d, stroke: color, class: cls || '' });
}

// bollinger line, dashed where it rises or falls fast
function band(svg, points, color, limit) {
    let run = [points[0]];
    let steep = false;
    for (let i = 1; i < points.length; i++) {
        const a = points[i - 1];
        const b = points[i];
        const now = Math.abs(b[1] - a[1]) > limit * (b[0] - a[0]);
        if (now !== steep && run.length > 1) {
            curve(svg, straight(run), color, steep ? 'steep' : '');
            run = [a];
        }
        steep = now;
        run.push(b);
    }
    curve(svg, straight(run), color, steep ? 'steep' : '');
}

function level(svg, y, color) {
    add(svg, 'line', { x1: 10, x2: 2464, y1: y, y2: y, stroke: color });
}

function daySeparator(svg) {
    add(svg, 'line', { x1: 2299, x2: 2299, y1: 102, y2: 1412, stroke: '#d3d3d3', class: 'dashed' });
}

function axis(name, labels) {
    const el = document.querySelector(`[data-panel="${name}"] .axis`);
    const box = boxes[name];
    labels.forEach(([text, y, cls]) => {
        const span = document.createElement('span');
        span.textContent = text;
        span.className = cls || '';
        span.style.top = (y - box[1] + 2) / (box[3] + 4) * 100 + '%';
        el.appendChild(span);
    });
}

// ---- price ----
const price = layer('price', 'back');
level(price, 351, '#c8ccc8');

const magentaUpper = [
    '10,518 26,505 60,470 120,450 217,449 248,449 283,454 320,455 340,462 363,473 400,477 425,467 470,460 540,452 600,444 650,442 700,441 740,446 765,461 780,471 813,481 828,468 841,466 857,466 864,453 874,408 885,374 892,344 900,299 915,264 938,214 951,175 964,135 977,102',
    '1229,102 1236,130 1242,155 1252,190 1260,205 1270,212 1294,213 1303,219 1344,221 1367,243 1374,237 1397,228 1407,212 1428,195 1453,165 1464,145 1486,102',
    '1607,102 1630,122 1646,150 1662,167 1688,185 1713,210 1735,237 1764,267 1770,269 1783,269 1806,262 1831,260 1866,248 1892,246 1930,227 1968,200 1978,197 1992,197 2010,210 2048,223 2064,244 2083,289 2108,349 2137,406 2153,471 2163,513 2171,537 2185,548 2207,551 2230,575 2252,585 2274,588 2313,586 2341,576 2364,575 2389,585 2408,590 2424,599 2462,607'
];
const magentaLower = [
    '10,620 26,629 100,640 218,620 240,616 267,606 300,586 333,571 363,552 380,548 400,538 440,536 500,550 560,580 620,588 700,595 740,608 780,632 813,640 818,655 831,670 841,677 857,678 867,690 882,737 895,772 902,802 915,821 938,844 953,870',
    '1063,870 1081,859 1112,821 1137,798 1158,782 1175,759 1201,705 1214,662 1224,608 1234,563 1242,523 1249,473 1260,438 1269,429 1306,421 1349,418 1362,409 1379,428 1397,446 1413,478 1438,518 1459,568 1476,627 1489,672 1502,702 1520,719 1548,744 1586,753 1624,749 1656,734 1688,721 1719,703 1758,678 1770,677 1780,683 1809,714 1853,749 1892,758 1936,806 1975,870',
    '2133,870 2150,831 2166,787 2179,774 2207,770 2236,753 2274,746 2348,751 2370,739 2389,724 2408,720 2418,711 2453,692 2462,691'
];
magentaUpper.concat(magentaLower).forEach(p => curve(price, straight(parse(p)), MAGENTA));

const blueUpper = '10,531 26,515 100,495 218,493 230,490 277,499 320,489 343,489 367,493 400,493 440,502 490,517 560,525 640,522 700,524 760,514 780,509 813,505 821,490 831,487 857,490 864,458 874,403 885,349 895,284 905,219 913,185 923,160 938,140 951,134 958,137 969,170 979,197 987,212 1012,218 1022,228 1058,229 1066,233 1078,262 1094,299 1117,311 1132,306 1155,303 1183,315 1198,316 1219,301 1234,287 1242,259 1252,251 1267,249 1290,258 1311,264 1351,265 1363,280 1373,257 1400,254 1408,247 1438,269 1459,299 1474,339 1494,361 1510,399 1520,419 1540,451 1550,459 1566,451 1573,443 1589,401 1608,384 1621,395 1659,394 1681,354 1691,347 1707,345 1755,346 1765,353 1780,316 1793,304 1806,314 1831,351 1847,374 1858,399 1869,448 1879,498 1885,538 1895,560 1927,565 1946,590 1971,598 2000,625 2029,637 2051,661 2070,658 2086,650 2124,642 2137,647 2172,640 2198,631 2249,635 2313,634 2341,617 2415,608 2434,610 2450,615 2462,630';
const blueLower = '10,587 26,591 100,560 218,521 247,526 290,526 330,524 350,517 373,511 400,508 440,520 500,548 560,588 600,590 650,586 700,612 740,604 780,620 803,630 813,640 823,662 834,682 844,695 857,696 864,704 872,734 882,762 900,801 908,799 918,789 928,764 936,729 943,677 953,617 961,563 966,518 974,448 982,403 992,381 1007,370 1035,383 1050,374 1073,376 1096,355 1114,354 1132,371 1155,387 1198,388 1229,399 1242,407 1252,406 1265,394 1280,369 1306,351 1313,343 1341,345 1357,351 1364,351 1369,389 1382,418 1397,443 1405,478 1423,508 1443,548 1464,593 1479,627 1494,672 1502,679 1520,666 1550,655 1586,661 1595,652 1608,607 1621,570 1643,550 1665,519 1684,517 1697,500 1732,504 1751,493 1765,472 1774,503 1783,558 1796,612 1809,645 1834,680 1857,706 1863,707 1873,692 1882,670 1892,662 1917,680 1943,692 1965,722 1987,742 2019,747 2051,739 2077,740 2108,719 2128,718 2134,706 2166,683 2204,678 2236,663 2268,651 2316,651 2344,657 2364,653 2383,660 2402,672 2427,681 2446,683 2462,676';
band(price, parse(blueUpper), BLUE, 3.8);
band(price, parse(blueLower), BLUE, 3.8);

const averages = [
    [BLUE, '10,555 26,548 218,507 267,509 333,503 400,498 500,530 600,560 700,570 780,563 813,574 846,591 864,590 882,558 908,498 933,448 948,399 961,354 974,314 984,301 1002,294 1030,305 1058,301 1086,324 1127,334 1168,349 1214,350 1234,344 1260,326 1290,306 1316,304 1351,306 1372,329 1392,354 1433,394 1464,443 1494,513 1515,540 1550,558 1589,540 1611,498 1630,478 1649,471 1675,448 1700,423 1739,426 1764,412 1774,418 1796,458 1815,493 1847,543 1879,598 1904,620 1936,635 1968,662 2006,687 2051,701 2070,701 2134,677 2198,655 2262,637 2325,636 2351,632 2389,640 2427,650 2462,651'],
    [MAGENTA, '10,569 26,567 218,534 267,527 333,518 400,508 500,515 600,540 700,550 780,553 818,564 851,573 867,570 892,558 938,530 974,500 1035,466 1086,436 1117,416 1147,401 1178,388 1209,366 1239,336 1260,323 1280,319 1362,321 1392,334 1438,351 1494,389 1545,411 1580,420 1617,428 1656,448 1707,454 1764,471 1815,491 1860,500 1892,501 1943,517 2006,558 2057,588 2108,625 2140,642 2172,656 2242,666 2306,667 2357,661 2408,653 2462,650'],
    [RED, '10,562 26,557 218,529 300,522 400,512 500,522 600,545 700,552 780,553 813,564 846,575 867,568 887,548 908,520 938,493 969,458 994,441 1035,421 1086,401 1127,390 1168,386 1203,379 1249,360 1311,346 1364,343 1402,359 1453,389 1494,428 1515,441 1550,454 1580,457 1656,454 1688,443 1713,439 1767,437 1802,466 1841,488 1879,508 1943,550 2006,593 2057,616 2121,631 2198,635 2293,639 2351,636 2408,641 2462,645'],
    [CYAN, '10,557 26,550 218,512 240,517 290,514 333,508 400,504 480,522 560,548 640,562 700,565 780,562 813,568 844,595 864,590 882,550 908,493 933,453 953,418 974,389 994,374 1025,361 1061,352 1086,346 1117,345 1158,355 1198,352 1224,344 1249,326 1280,319 1362,321 1392,346 1433,386 1464,423 1494,478 1510,489 1545,500 1586,493 1611,476 1649,473 1675,456 1700,438 1739,437 1758,432 1770,438 1790,461 1815,491 1847,525 1892,568 1943,605 1987,642 2026,660 2057,669 2121,669 2172,662 2223,653 2313,647 2351,639 2389,640 2421,648 2462,650'],
    ['#fff', '10,550 26,536 218,510 240,514 290,508 330,503 400,502 440,520 500,537 560,560 620,575 700,572 740,560 780,562 813,580 830,605 844,617 857,605 872,560 890,500 905,440 920,405 938,385 950,355 965,325 978,313 995,312 1020,322 1035,326 1058,325 1090,330 1120,335 1150,355 1165,357 1195,350 1225,330 1250,309 1265,307 1295,307 1330,317 1362,321 1375,345 1397,370 1413,402 1440,435 1470,490 1490,530 1502,551 1520,541 1545,538 1586,505 1608,468 1630,466 1649,469 1675,438 1691,418 1716,419 1735,427 1755,421 1764,426 1777,453 1802,508 1821,530 1879,593 1904,617 1936,640 1968,670 1990,687 2006,686 2026,695 2057,692 2108,677 2166,662 2223,648 2306,642 2344,632 2376,637 2408,650 2462,653'],
    ['#fff', '10,617 26,617 218,603 267,600 400,592 560,586 700,584 780,583 864,584 1000,562 1100,545 1230,526 1364,507 1420,505 1494,508 1560,509 1640,505 1700,501 1770,499 1840,503 1900,509 1950,514 2040,525 2150,536 2300,547 2390,552 2462,557'],
    [GOLD, '10,537 26,520 218,510 240,512 270,505 310,500 350,500 400,502 430,515 480,540 540,562 580,577 640,578 700,588 740,552 765,548 780,562 800,578 813,600 823,630 836,646 846,640 857,603 867,558 877,478 890,408 900,354 913,326 930,336 941,319 951,287 971,265 994,292 1010,311 1035,331 1061,324 1086,329 1117,339 1137,359 1158,371 1178,351 1198,346 1219,326 1234,309 1249,287 1270,294 1300,309 1326,319 1362,324 1369,359 1397,403 1410,441 1428,453 1453,498 1474,558 1494,607 1502,600 1515,558 1535,540 1550,535 1566,505 1590,460 1611,436 1630,451 1648,471 1662,443 1675,403 1688,390 1713,403 1735,431 1755,417 1767,428 1780,478 1793,538 1806,575 1834,580 1879,620 1924,650 1946,670 1968,702 1987,711 2006,695 2026,704 2057,694 2080,677 2128,665 2166,652 2198,646 2293,640 2325,635 2343,624 2370,635 2389,650 2421,662 2462,656']
];
averages.forEach(([color, p]) => curve(price, smooth(parse(p)), color));

const priceFront = layer('price', 'front');
const close = '10,521 20,500 33,500 43,510 52,531 58,520 68,536 80,533 87,515 93,522 107,505 115,499 125,507 137,493 147,500 160,510 165,500 180,518 188,522 197,508 217,508 223,527 233,518 253,513 267,503 277,503 293,495 312,497 327,500 343,508 360,498 375,495 387,500 400,506 408,500 428,519 449,531 470,538 490,544 510,540 522,547 544,571 563,588 580,574 596,571 610,576 629,563 642,591 655,580 673,575 685,586 697,607 708,575 718,563 728,550 734,555 743,514 752,540 767,547 776,580 785,620 795,580 803,612 813,621 818,682 826,662 831,670 839,652 846,598 851,548 856,493 862,448 868,389 874,359 879,334 884,369 890,339 895,239 900,238 904,299 908,289 915,339 923,364 928,334 933,344 941,319 947,259 954,224 959,244 965,239 971,269 984,319 993,297 999,334 1012,344 1020,321 1025,321 1030,359 1040,319 1058,319 1068,341 1081,329 1096,349 1112,334 1122,364 1132,359 1140,389 1147,376 1155,385 1165,366 1171,326 1180,351 1188,371 1191,349 1199,306 1214,319 1224,294 1234,289 1239,229 1242,264 1254,304 1265,299 1283,314 1291,299 1303,319 1315,341 1323,311 1334,334 1343,304 1354,344 1362,321 1366,408 1372,461 1378,408 1385,433 1391,411 1400,448 1403,510 1413,451 1420,458 1425,488 1431,478 1439,528 1443,498 1453,548 1461,602 1465,575 1469,607 1472,585 1481,662 1487,620 1491,645 1497,612 1504,538 1511,503 1520,530 1533,523 1538,538 1544,548 1550,483 1556,503 1560,466 1570,498 1576,468 1582,438 1592,418 1598,428 1608,401 1614,468 1624,451 1633,468 1645,496 1654,408 1659,428 1667,359 1675,369 1682,364 1691,396 1703,416 1719,438 1732,456 1742,408 1749,394 1758,418 1765,458 1772,538 1780,593 1788,617 1796,605 1801,625 1809,578 1816,550 1823,590 1831,583 1839,617 1853,620 1866,622 1871,615 1879,662 1888,650 1901,667 1909,642 1917,662 1927,650 1933,680 1946,682 1949,737 1955,692 1965,742 1973,692 1981,737 1994,697 2000,670 2008,687 2012,752 2017,697 2026,702 2035,687 2045,699 2054,682 2067,665 2080,667 2096,677 2115,657 2134,662 2150,647 2172,647 2191,632 2204,645 2242,648 2265,636 2290,643 2316,635 2336,612 2351,637 2367,637 2383,665 2402,662 2418,670 2434,653 2462,657';
const priceNoise = x => x < 400 || x > 2050 ? 3 : x < 540 ? 5 : 11;
curve(priceFront, straight(jagged(parse(close), priceNoise)), YELLOW);
daySeparator(priceFront);
add(priceFront, 'polygon', { points: '1944,102 1962,102 1953,112', fill: '#c0c0c0' });
const priceLabels = [];
for (let i = 0; i < 11; i++) {
    priceLabels.push([(71.949 - i * 0.25).toFixed(3), 138 + i * 66, 'tick']);
}
priceLabels.push(['69.204', 865, 'tick'], ['71.144', 351, 'tag price-tag']);
axis('price', priceLabels);

// ---- rsi ----
const rsi = layer('rsi', 'back');
level(rsi, 885, RED);
level(rsi, 957, '#ff69b4');
level(rsi, 959, MAGENTA);
level(rsi, 995, CYAN);
level(rsi, 1031, '#3cb371');
level(rsi, 1067, '#2e8b57');
const rsiLine = '10,955 16,942 22,935 28,940 34,938 40,950 48,972 58,975 90,990 138,946 150,960 200,975 240,998 262,986 320,978 360,982 410,990 430,1012 470,1045 520,1035 530,1042 570,1048 600,1010 640,1005 690,1048 740,970 770,980 815,1045 840,1045 857,950 866,910 871,904 876,914 880,904 884,912 890,914 894,900 896,887 899,887 903,912 912,930 948,918 976,948 1010,970 1060,985 1100,978 1140,1010 1180,980 1218,965 1240,948 1260,975 1300,985 1340,1005 1362,1010 1370,1044 1374,1056 1378,1040 1392,1030 1400,1042 1404,1062 1409,1040 1420,1034 1430,1046 1438,1058 1444,1038 1452,1042 1460,1068 1466,1052 1474,1062 1480,1076 1486,1056 1496,1050 1505,1020 1520,1005 1530,1015 1538,985 1550,975 1562,988 1580,978 1595,970 1608,967 1618,995 1633,1004 1650,990 1665,958 1680,962 1700,963 1715,975 1725,972 1740,985 1752,982 1760,1010 1768,1045 1780,1055 1800,1052 1816,1030 1830,1045 1850,1048 1866,1045 1880,1058 1900,1050 1920,1052 1940,1058 1951,1076 1960,1060 1980,1062 2000,1045 2010,1058 2020,1030 2050,1015 2080,1002 2110,1000 2150,990 2190,980 2220,984 2250,978 2258,974 2266,980 2272,976 2290,984 2307,975 2316,970 2320,957 2328,966 2335,943 2342,950 2348,987 2357,988 2361,1006 2365,987 2370,990 2375,1013 2387,1027 2400,1019 2412,1024 2420,1034 2428,1001 2447,1001 2457,994 2463,1006';
curve(rsi, straight(jagged(parse(rsiLine), x => x > 2050 ? 2 : 4)), '#fff');

const rsiFront = layer('rsi', 'front');
const maFast = '11,967 29,952 44,944 58,952 80,975 102,975 119,962 145,955 170,960 187,977 218,985 250,990 279,978 315,967 344,978 383,978 412,983 436,1007 460,1032 509,1027 538,1030 557,1042 587,1041 601,1027 620,1012 635,1013 652,1027 674,1012 686,1005 703,1017 722,1015 746,985 755,977 772,976 793,1002 818,1028 835,1040 847,1038 859,1017 871,973 890,923 905,907 919,913 936,930 953,936 973,928 987,938 1011,963 1033,974 1070,975 1118,985 1152,1002 1167,1001 1200,983 1230,968 1254,959 1288,978 1331,993 1356,993 1370,1007 1390,1027 1404,1035 1419,1034 1438,1040 1448,1039 1467,1053 1486,1061 1496,1060 1510,1045 1530,1018 1551,996 1580,986 1608,980 1625,990 1641,995 1660,980 1682,968 1700,972 1722,982 1745,975 1763,982 1780,1012 1796,1040 1829,1050 1878,1041 1927,1044 1959,1061 2000,1053 2057,1020 2122,996 2188,982 2253,981 2299,980 2315,980 2328,972 2343,960 2357,967 2373,980 2387,1002 2420,1024 2440,1016 2464,1004';
const maSlow = '11,975 39,962 53,957 87,962 136,965 170,963 208,967 247,983 281,984 334,974 388,975 427,987 465,1005 504,1023 538,1030 582,1033 645,1026 679,1013 722,1015 756,997 805,994 827,1005 851,1017 871,1008 900,973 934,937 953,922 968,922 987,929 1011,946 1036,952 1079,973 1128,982 1162,992 1210,990 1254,973 1293,970 1322,977 1365,993 1399,1008 1433,1025 1462,1040 1500,1051 1535,1037 1592,999 1633,991 1698,980 1755,975 1796,999 1861,1037 1927,1040 1992,1048 2041,1032 2106,1007 2188,988 2270,980 2313,982 2347,972 2373,976 2407,988 2427,1000 2443,1010 2464,1012';
curve(rsiFront, smooth(parse(maFast)), GOLD, 'thick');
curve(rsiFront, smooth(parse(maSlow)), '#1e90ff', 'thick');
daySeparator(rsiFront);
axis('rsi', [
    ['70.6766', 888], ['34.8777', 1071],
    ['68.7500', 883, 'tag red'],
    ['56.1912', 956, 'tag magenta'],
    ['50.0000', 993, 'tag cyan'],
    ['43.7500', 1029, 'tag green'],
    ['37.5168', 1065, 'tag sea']
]);

// ---- spearman ----
const spearman = layer('spearman', 'back');
const rank = '10,1096 33,1095 45,1146 53,1149 72,1145 86,1100 98,1101 118,1095 133,1143 145,1101 161,1143 174,1123 188,1149 204,1098 227,1147 242,1096 269,1095 278,1100 298,1096 310,1103 327,1141 343,1147 359,1099 371,1117 381,1101 398,1147 417,1117 429,1147 447,1151 465,1111 486,1143 504,1105 521,1148 535,1151 543,1118 558,1150 573,1100 584,1128 600,1101 614,1095 627,1147 643,1151 660,1095 678,1145 687,1143 698,1150 714,1100 731,1117 747,1095 763,1150 776,1143 788,1148 802,1110 815,1148 826,1150 841,1100 857,1095 882,1095 890,1103 906,1097 918,1148 927,1150 943,1100 957,1095 974,1149 988,1151 996,1144 1011,1148 1024,1105 1037,1143 1051,1097 1069,1147 1087,1104 1102,1150 1116,1104 1133,1148 1143,1128 1151,1141 1161,1121 1171,1095 1189,1147 1204,1097 1220,1123 1231,1096 1247,1095 1261,1151 1278,1140 1285,1144 1295,1117 1312,1150 1326,1100 1339,1131 1351,1104 1370,1150 1391,1105 1409,1150 1423,1107 1436,1148 1452,1140 1467,1151 1486,1147 1498,1098 1512,1095 1527,1146 1540,1138 1552,1099 1567,1096 1586,1117 1600,1098 1613,1147 1627,1150 1641,1118 1656,1096 1672,1101 1688,1146 1705,1150 1722,1097 1736,1095 1754,1140 1768,1150 1782,1146 1796,1120 1812,1097 1828,1143 1843,1120 1856,1148 1870,1140 1886,1112 1898,1148 1911,1099 1925,1140 1940,1150 1955,1147 1974,1112 1988,1096 2004,1095 2020,1148 2038,1097 2050,1100 2062,1147 2076,1098 2092,1095 2103,1107 2112,1095 2128,1140 2140,1143 2157,1099 2174,1096 2190,1150 2205,1143 2222,1151 2240,1120 2247,1103 2258,1094 2272,1096 2278,1131 2288,1146 2298,1134 2307,1098 2323,1094 2343,1098 2352,1146 2362,1148 2371,1117 2380,1148 2395,1149 2404,1110 2417,1146 2422,1149 2430,1100 2440,1097 2448,1103 2453,1131 2458,1112 2463,1129';
const rankPath = eased(parse(rank), 0.22);
const defs = add(spearman, 'defs', {});
add(add(defs, 'clipPath', { id: 'high' }), 'rect', { x: 10, y: 1092, width: 2454, height: 10 });
add(add(defs, 'clipPath', { id: 'low' }), 'rect', { x: 10, y: 1144, width: 2454, height: 12 });
curve(spearman, rankPath, '#a9a9a9');
curve(spearman, rankPath, '#1ebeff', 'bulge').setAttribute('clip-path', 'url(#high)');
curve(spearman, rankPath, '#f4a460', 'bulge').setAttribute('clip-path', 'url(#low)');
daySeparator(spearman);
axis('spearman', [['1', 1105], ['0.00', 1123, 'tick'], ['-1', 1142]]);

// ---- ssrc ----
const ssrc = layer('ssrc', 'back');
const T = 1191;
const B = 1383;
[1201, 1211, 1219, 1287, 1355, 1363, 1373].forEach(y => level(ssrc, y, '#696969'));
const cycle = [
    [10, 1196], [14, T], [30, T], [49, B], [70, B], [88, T], [121, T], [140, 1329], [148, 1277], [166, B], [190, B],
    [207, 1202], [228, 1381], [249, T], [300, T], [328, B], [343, B], [365, T], [378, T], [395, B], [448, B],
    [467, 1232], [487, B], [506, 1222], [525, B], [562, B], [583, T], [610, T], [633, B], [641, B], [663, T],
    [688, B], [698, B], [718, T], [745, T], [767, B], [827, B], [847, T], [902, T], [924, B], [947, T], [958, T],
    [980, B], [1012, B], [1026, 1292], [1032, 1309], [1054, 1192], [1076, B], [1149, B], [1170, T], [1179, T],
    [1184, 1195], [1201, 1195], [1206, T], [1244, T], [1264, B], [1280, B], [1290, 1366], [1297, 1366], [1308, 1380],
    [1318, 1376], [1339, 1193], [1355, B], [1378, B], [1388, 1366], [1403, 1366], [1418, B], [1482, B], [1502, T],
    [1518, T], [1538, 1370], [1556, T], [1600, T], [1620, B], [1647, B], [1664, T], [1682, T], [1703, B], [1714, B],
    [1730, T], [1747, T], [1768, B], [1802, B], [1818, 1194], [1842, B], [1897, B], [1915, 1205], [1933, B],
    [1970, B], [1989, T], [2008, T], [2025, 1381], [2041, T], [2049, T], [2064, B], [2080, T], [2122, T],
    [2139, 1257], [2158, T], [2185, T], [2202, B], [2232, B], [2253, T], [2268, T], [2289, 1382], [2310, T],
    [2337, T], [2355, B], [2393, B], [2403, 1365], [2413, 1365], [2433, T], [2445, T], [2463, 1372]
];
curve(ssrc, eased(cycle, 0.3), '#fff');
daySeparator(ssrc);
axis('ssrc', [
    ['1.3', 1173], ['0.9', 1200, 'near'], ['0.8', 1210, 'near'], ['0.7', 1218, 'near'],
    ['0.00', 1287, 'tick'], ['0', 1287, 'near'],
    ['-0.7', 1355, 'near'], ['-0.8', 1363, 'near'], ['-0.9', 1373, 'near'], ['-1.3', 1399]
]);

// ---- bands cross ----
const bands = layer('bands', 'back');
[
    [10, 2454, '#808080'],
    [23, 29, '#3ccd3c'],
    [472, 44, RED],
    [818, 52, RED],
    [870, 90, '#3ccd3c'],
    [1398, 76, RED]
].forEach(([x, width, fill]) => add(bands, 'rect', { x, y: 1420, width, height: 48, fill }));
add(bands, 'polygon', { points: '10,1457 20,1468 10,1468', fill: '#d3d3d3' });
axis('bands', [['1', 1431], ['0', 1455]]);

// ---- tables and buttons ----
const pairs = 'AUDCAD AUDJPY AUDNZD AUDUSD AUDCHF CHFJPY CADJPY EURAUD EURCAD EURGBP EURJPY EURNZD EURUSD GBPAUD GBPCAD GBPJPY GBPNZD GBPUSD GBPCHF NZDCAD NZDJPY NZDCHF NZDUSD USDCAD USDJPY USDCHF XAUUSD XAGUSD';
document.getElementById('pairs').innerHTML = pairs.split(' ').map(p => `<tr><td>${p}</td><td></td></tr>`).join('');

const symbolRows = [
    'USDCHF GBPUSD EURUSD USDJPY USDCAD AUDUSD EURGBP EURAUD EURCHF EURJPY GBPCHF CADJPY GBPJPY AUDNZD AUDCAD',
    'AUDCHF AUDJPY CHFJPY EURNZD EURCAD CADCHF NZDJPY NZDUSD EURCZK EURHUF EURMXN EURNOK EURPLN EURSEK EURTRY',
    'GBPAUD GBPCAD GBPNZD GBPTRY NOKSEK NZDCAD NZDCHF USDCNH USDCZK USDDKK USDHKD USDHUF USDILS USDMXN USDNOK',
    'USDPLN USDRUB USDSEK USDSGD USDTRY USDZAR XAGUSD XAUUSD XPDUSD XPTUSD XAUEUR AUS200 ESP35 GER30 JPY225',
    'FRA40 UK100 NAS100 US30 SP500 UKOIL USOIL BTCUSD ETHUSD DSHUSD LTCUSD EURSGD GBPNOK HK50'
];
document.getElementById('symbols').innerHTML = symbolRows.map(row => '<div>' + row.split(' ').map(s =>
    `<button class="${s === 'USOIL' ? 'selected' : ''}"><span>${s}</span></button>`).join('') + '</div>').join('')
    + '<div><button class="selected"></button>' + '<button></button>'.repeat(8) + '</div>';

const times = ['3 Jul 2023', '3 Jul 05:41', '3 Jul 06:45', '3 Jul 08:00', '3 Jul 09:04', '3 Jul 10:08', '3 Jul 11:12',
    '3 Jul 12:16', '3 Jul 13:20', '3 Jul 14:24', '3 Jul 15:28', '3 Jul 16:32', '3 Jul 17:36', '3 Jul 18:40',
    '3 Jul 19:44', '3 Jul 20:48', '3 Jul 21:52', '3 Jul 23:00', '4 Jul 01:15', '4 Jul 02:48'];
document.getElementById('times').innerHTML = times.map(t => `<span>${t}</span>`).join('');
```
